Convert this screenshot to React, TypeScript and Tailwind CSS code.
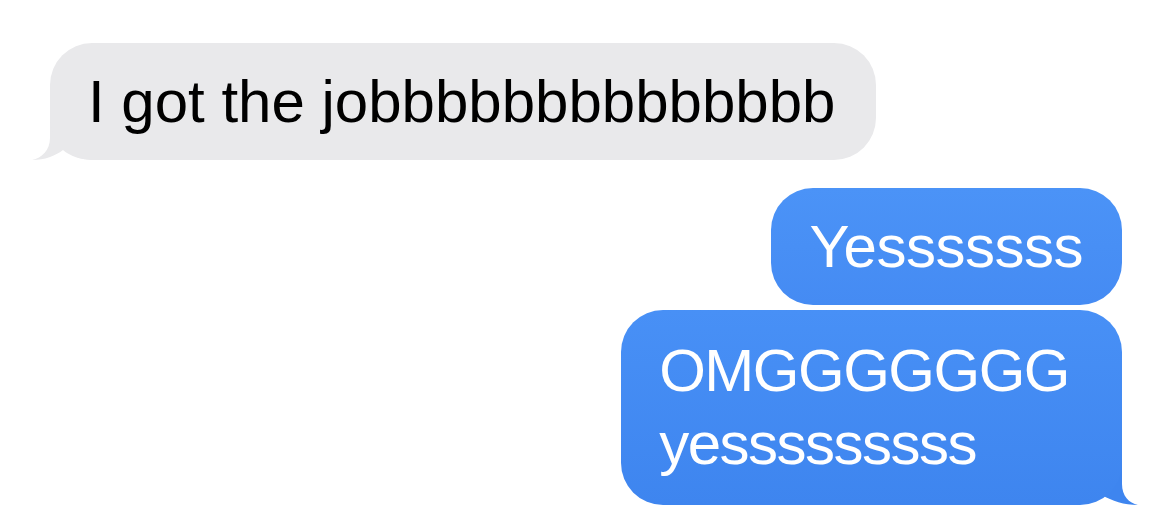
import React from "react";

function LeftTail({ color }: { color: string }) {
  return (
    <svg
      className="absolute left-[-18px] bottom-0"
      width="70"
      height="55"
      viewBox="0 0 70 55"
      aria-hidden="true"
    >
      <path
        d="M18 5 L18 33 C18 45 10 53 0 55 C13 55 23 51 31 45 C38 51 48 55 63 55 L63 5 Z"
        fill={color}
      />
    </svg>
  );
}

function RightTail({ color }: { color: string }) {
  return (
    <svg
      className="absolute right-[-16px] bottom-0"
      width="72"
      height="48"
      viewBox="0 0 72 48"
      aria-hidden="true"
    >
      <path
        d="M56 0 L56 27 C56 39 63 46 72 48 C58 48 46 44 36 38 C29 44 19 48 2 48 L2 0 Z"
        fill={color}
      />
    </svg>
  );
}

export default function App() {
  return (
    <div
      className="w-[1170px] h-[525px] bg-white flex flex-col pt-[43px] overflow-hidden"
      style={{ fontFamily: '"Liberation Sans", Arial, Helvetica, sans-serif' }}
    >
      <div className="self-start ml-[50px] relative">
        <LeftTail color="#e9e9eb" />
        <div className="relative rounded-[42px] bg-[#e9e9eb] pl-[38px] pr-[41px] py-[22px] text-[60px] leading-[73px] text-black whitespace-nowrap">
          I got the jobbbbbbbbbbbbbb
        </div>
      </div>

      <div className="self-end mr-[48px] mt-[28px] relative">
        <div className="relative rounded-[42px] bg-gradient-to-b from-[#4b93f7] to-[#458bf3] px-[39px] py-[22px] text-[60px] leading-[73px] text-white whitespace-nowrap tracking-[-0.5px]">
          Yesssssss
        </div>
      </div>

      <div className="self-end mr-[48px] mt-[5px] relative">
        <RightTail color="#3e85ef" />
        <div className="relative rounded-[42px] bg-gradient-to-b from-[#4890f6] to-[#3e85ef] pl-[38px] pr-[53px] pt-[24px] pb-[25px] text-[60px] leading-[73px] text-white whitespace-nowrap tracking-[-1.5px]">
          <div>OMGGGGGGG</div>
          <div>yesssssssss</div>
        </div>
      </div>
    </div>
  );
}
